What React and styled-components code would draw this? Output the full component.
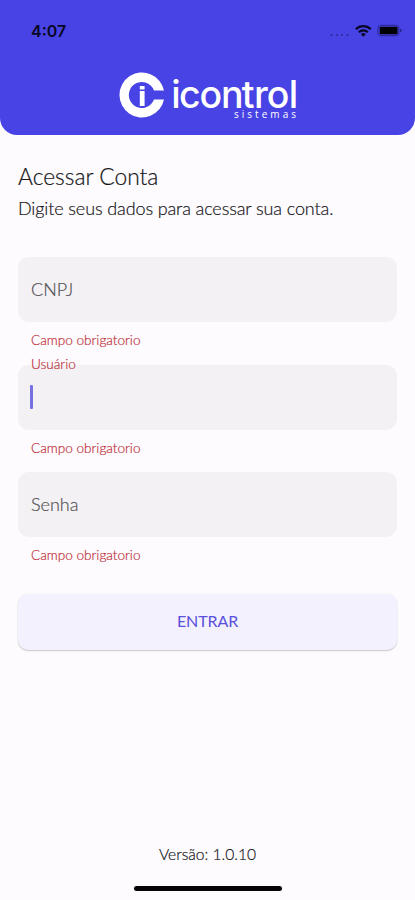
import React from "react";
import styled, { createGlobalStyle } from "styled-components";

const GlobalStyle = createGlobalStyle`
  *, *::before, *::after { box-sizing: border-box; }
  body { margin: 0; background: #fdfbfe; font-family: Lato, sans-serif; }
  h1, p { margin: 0; font-weight: 300; }
  h1, p, label { -webkit-text-stroke: 0.2px currentColor; }
`;

const Screen = styled.div`
  display: flex;
  flex-direction: column;
  height: 900px;
  background: #fdfbfe;
  color: #161519;
`;

const Header = styled.header`
  display: flex;
  flex-direction: column;
  height: 135px;
  background: #4843e4;
  border-radius: 0 0 17px 17px;
`;

const StatusBar = styled.div`
  display: flex;
  align-items: center;
  justify-content: space-between;
  height: 62px;
  padding: 0 12px 0 31px;
`;

const Clock = styled.span`
  font: 600 16px/20px Inter, sans-serif;
  color: #080724;
`;

const StatusIcons = styled.svg`
  display: block;
`;

const Brand = styled.svg`
  display: block;
  align-self: center;
  margin-top: 8px;
`;

const Main = styled.main`
  display: flex;
  flex: 1;
  flex-direction: column;
  padding: 27px 18px 0;
`;

const Title = styled.h1`
  font-size: 22.8px;
  line-height: 28px;
`;

const Subtitle = styled.p`
  margin-top: 6px;
  font-size: 18px;
  line-height: 24px;
  letter-spacing: -0.11px;
`;

const Form = styled.form`
  display: flex;
  flex-direction: column;
  margin-top: 37px;
`;

const Field = styled.div`
  height: 107.5px;
`;

const InputBox = styled.div`
  position: relative;
  display: flex;
  align-items: center;
  height: 65px;
  padding: 0 13px;
  border-radius: 11px;
  background: #f3f1f4;
`;

const Label = styled.label`
  padding-bottom: 2px;
  font-size: 18px;
  font-weight: 300;
  line-height: 22px;
  color: #535156;
`;

const FloatingLabel = styled.label`
  position: absolute;
  top: -9px;
  left: 13px;
  font-size: 13.6px;
  font-weight: 300;
  line-height: 16px;
  color: #bd303a;
`;

const Caret = styled.span`
  width: 3px;
  height: 24px;
  margin-left: -1px;
  border-radius: 1px;
  background: #7771df;
`;

const ErrorText = styled.p`
  padding: 10px 13px 0;
  font-size: 13.6px;
  line-height: 16px;
  color: #bd303a;
`;

const SubmitButton = styled.button`
  height: 56px;
  margin-top: 14px;
  padding: 0 0 2px;
  border: 0;
  border-radius: 10px;
  background: #f4f1fe;
  box-shadow: 0 1px 1.5px rgba(0, 0, 0, 0.2), 0 0 2px rgba(0, 0, 0, 0.05);
  font: 400 16px/20px Lato, sans-serif;
  letter-spacing: -0.1px;
  color: #5a50dc;
`;

const Footer = styled.footer`
  display: flex;
  flex-direction: column;
  align-items: center;
  height: 56px;
`;

const Version = styled.p`
  font-size: 15.6px;
  line-height: 20px;
`;

const HomeIndicator = styled.div`
  width: 148px;
  height: 5px;
  margin-top: 22px;
  border-radius: 3px;
  background: #050505;
`;

const fields = [
  { label: "CNPJ", focused: false },
  { label: "Usuário", focused: true },
  { label: "Senha", focused: false },
];

function DeviceStatus() {
  return (
    <StatusIcons width="74" height="16" viewBox="0 0 74 16">
      <g fill="#2c278f">
        <circle cx="2.5" cy="12" r="1" />
        <circle cx="8" cy="12" r="1" />
        <circle cx="13" cy="12" r="1" />
        <circle cx="18.5" cy="12" r="1" />
      </g>
      <g fill="none" stroke="#080724" strokeWidth="2.2">
        <path d="M26.8 6.2a10.8 10.8 0 0 1 15 0" />
        <path d="M29.8 9.3a6.4 6.4 0 0 1 9 0" />
      </g>
      <path d="M31.9 11.2a3.4 3.4 0 0 1 4.8 0l-2.4 2.5z" fill="#080724" />
      <rect x="48.9" y="2.3" width="21" height="10.4" rx="3" fill="none" stroke="#29258b" />
      <rect x="50.7" y="3.7" width="17.8" height="7.6" rx="1" fill="#000" />
      <path d="M71 5.7q1.7.3 1.7 1.8T71 9.3z" fill="#29258b" />
    </StatusIcons>
  );
}

function BrandMark() {
  return (
    <Brand width="178" height="52" viewBox="119 70 178 52" fill="#fff" role="img" aria-label="icontrol sistemas">
      <path d="M164 90.5A22.5 22.5 0 1 0 164 99.5H154A13 13 0 1 1 154 90.5Z" />
      <rect x="139.8" y="86" width="4.8" height="3.5" rx=".6" />
      <path d="M139.8 91h4.8v15h-4.8z" />
      <text x="171.3 178.9 199.5 221 241.8 254 266.8 288.7" y="107.5" fontFamily="Inter, sans-serif" fontSize="37.5" fontWeight="500">icontrol</text>
      <text x="234" y="117.7" fontFamily="Open Sans, sans-serif" fontSize="10" fontWeight="500" textLength="62" lengthAdjust="spacing">sistemas</text>
    </Brand>
  );
}

export default function App() {
  return (
    <>
      <GlobalStyle />
      <Screen>
        <Header>
          <StatusBar>
            <Clock>4:07</Clock>
            <DeviceStatus />
          </StatusBar>
          <BrandMark />
        </Header>
        <Main>
          <Title>Acessar Conta</Title>
          <Subtitle>Digite seus dados para acessar sua conta.</Subtitle>
          <Form>
            {fields.map(({ label, focused }) => (
              <Field key={label}>
                <InputBox>
                  {focused ? (
                    <>
                      <FloatingLabel>{label}</FloatingLabel>
                      <Caret />
                    </>
                  ) : (
                    <Label>{label}</Label>
                  )}
                </InputBox>
                <ErrorText>Campo obrigatorio</ErrorText>
              </Field>
            ))}
            <SubmitButton type="button">ENTRAR</SubmitButton>
          </Form>
        </Main>
        <Footer>
          <Version>Versão: 1.0.10</Version>
          <HomeIndicator />
        </Footer>
      </Screen>
    </>
  );
}
